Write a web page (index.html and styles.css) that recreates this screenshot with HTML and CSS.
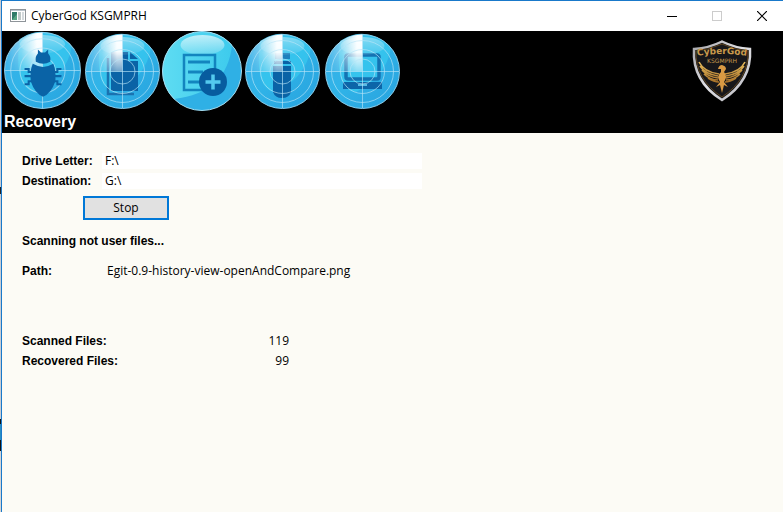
FILE: index.html
```html
<!DOCTYPE html>
<html lang="en">
<head>
<meta charset="utf-8">
<title>CyberGod KSGMPRH</title>
<link rel="stylesheet" href="styles.css">
</head>
<body>
<svg class="defs" width="0" height="0" aria-hidden="true">
  <defs>
    <linearGradient id="base" x1="0" y1="0" x2="1" y2="1">
      <stop offset="0" stop-color="#3aaee8"/><stop offset=".45" stop-color="#30b4e8"/><stop offset=".7" stop-color="#2cabe3"/><stop offset="1" stop-color="#27a3df"/>
    </linearGradient>
    <linearGradient id="sweep" x1="0" y1="0" x2="1" y2="0">
      <stop offset="0" stop-color="#fff" stop-opacity=".05"/><stop offset=".45" stop-color="#fff" stop-opacity=".4"/><stop offset=".85" stop-color="#fff" stop-opacity="1"/><stop offset="1" stop-color="#fff"/>
    </linearGradient>
    <linearGradient id="fade" x1="0" y1="0" x2="0" y2="1">
      <stop offset="0" stop-color="#fff"/><stop offset=".5" stop-color="#fff" stop-opacity=".95"/><stop offset="1" stop-color="#fff" stop-opacity=".4"/>
    </linearGradient>
    <linearGradient id="gloss" x1="0" y1="0" x2="0" y2="1">
      <stop offset="0" stop-color="#fff" stop-opacity=".65"/><stop offset="1" stop-color="#fff" stop-opacity=".15"/>
    </linearGradient>
    <linearGradient id="bright" x1="0" y1="0" x2="1" y2="0">
      <stop offset="0" stop-color="#5edcf2"/><stop offset="1" stop-color="#3ecbed"/>
    </linearGradient>
    <linearGradient id="gold" x1="0" y1="0" x2="0" y2="1">
      <stop offset="0" stop-color="#e9bd5c"/><stop offset="1" stop-color="#a8722a"/>
    </linearGradient>
    <linearGradient id="silver" x1="0" y1="0" x2="1" y2="1">
      <stop offset="0" stop-color="#a5a5aa"/><stop offset=".5" stop-color="#e2e2e6"/><stop offset="1" stop-color="#b4b4ba"/>
    </linearGradient>
    <mask id="down" maskUnits="userSpaceOnUse" x="0" y="0" width="80" height="80"><rect x="0" y="2" width="41" height="39" fill="url(#fade)"/></mask>
    <symbol id="disc" viewBox="0 0 80 80">
      <circle cx="40.500" cy="40.500" r="37" fill="url(#base)"/>
      <path d="M18 10A37 37 0 0 1 69 17Q64 46 34 61Q12 60 18 10Z" fill="#36c6ed" opacity=".85"/>
      <circle cx="40.500" cy="40.500" r="37" fill="none" stroke="#8bcdeb"/>
    </symbol>
    <symbol id="radar" viewBox="0 0 80 80">
      <ellipse cx="40.500" cy="15" rx="22" ry="9" fill="url(#gloss)" opacity=".6"/>
      <g mask="url(#down)"><path d="M40.500 40.500V3.500A37 37 0 0 0 3.500 40.500Z" fill="url(#sweep)"/></g>
      <g fill="none" stroke="#b9e5f7" stroke-opacity=".65">
        <circle cx="40.500" cy="40.500" r="12.500"/><circle cx="40.500" cy="40.500" r="22"/><circle cx="40.500" cy="40.500" r="31"/>
        <path d="M4 40.500H77M40.500 4V77"/>
      </g>
    </symbol>
  </defs>
</svg>
<div class="window">
  <header class="titlebar">
    <svg class="app-icon" viewBox="0 0 16 14" aria-hidden="true">
      <rect x=".5" y=".5" width="15" height="12" fill="#fff" stroke="#8e9499"/>
      <path d="M1 1.500H15" stroke="#b9c3ca"/>
      <rect x="2" y="3" width="5" height="8" fill="#2f7a68"/><path d="M2 11L7 5V11Z" fill="#57a583"/>
      <rect x="8" y="3" width="3" height="8" fill="#bfc8c8"/><rect x="12" y="3" width="2" height="8" fill="#d4dadd"/>
    </svg>
    <h1 class="title">CyberGod KSGMPRH</h1>
    <div class="controls">
      <button class="control" aria-label="Minimize"><svg viewBox="0 0 10 10"><path d="M0 5.500H10" stroke="#000"/></svg></button>
      <button class="control" aria-label="Maximize" disabled><svg viewBox="0 0 10 10"><rect x=".5" y=".5" width="9" height="9" fill="none" stroke="#ccc"/></svg></button>
      <button class="control" aria-label="Close"><svg viewBox="0 0 10 10"><path d="M0 0L10 10M10 0L0 10" stroke="#000" stroke-width="1.200"/></svg></button>
    </div>
  </header>
  <div class="banner">
    <div class="banner-top">
      <nav class="tools" aria-label="Tools">
        <button class="tool" aria-label="Virus scan"><svg viewBox="1 2 78 78">
          <use href="#disc" width="80" height="80"/>
          <use href="#radar" width="80" height="80"/>
          <g fill="#0a63a6"><path d="M34 32Q33 27 36 24L36 20L39 23H43L46 20L46 24Q49 27 48 32Q41 36 34 32Z"/><path d="M31 34Q41 40 51 34Q54 41 53 51Q49 63 41 66Q33 63 29 51Q28 41 31 34Z"/></g>
          <path d="M31 42H27V39H23M31 46H23M31 51H27V54H23M51 42H55V39H59M51 46H59M51 51H55V54H59" fill="none" stroke="#0a63a6" stroke-width="2"/>
        </svg></button>
        <button class="tool" aria-label="Documents"><svg viewBox="0 0 80 80">
          <use href="#disc" width="80" height="80"/>
          <path d="M26 27V63H52" fill="none" stroke="#1a72b0" stroke-width="2.500"/><path d="M29 21H46V30H56V60H29Z" fill="#0a63a6"/><path d="M48 21L56 28H48Z" fill="#0a63a6"/>
          <use href="#radar" width="80" height="80"/>
        </svg></button>
        <button class="tool" aria-label="Recovery" aria-current="page"><svg viewBox="0 0 80 80">
          <circle cx="40" cy="40" r="39.500" fill="#2fb0e5"/>
          <path d="M40 .5A39.500 39.500 0 0 0 12 68Q65 62 70 14Q58 .5 40 .5Z" fill="url(#bright)"/>
          <circle cx="40" cy="40" r="39.500" fill="none" stroke="#a5dcef"/>
          <ellipse cx="40.500" cy="14" rx="22" ry="10" fill="url(#gloss)"/>
          <rect x="22" y="24" width="31" height="35" fill="none" stroke="#1385bf" stroke-width="2.500"/>
          <path d="M26 31H48M26 41H41M26 51H38" stroke="#1385bf" stroke-width="3"/>
          <circle cx="51" cy="51" r="14" fill="#075c9f"/><path d="M51 43.500V58.500M43.500 51H58.500" stroke="#54c9ee" stroke-width="3.500"/>
        </svg></button>
        <button class="tool" aria-label="USB drive"><svg viewBox="0 0 80 80">
          <use href="#disc" width="80" height="80"/>
          <path d="M33 22H48V28H33Z" fill="#1d80bd"/><path d="M32 30H49V33H32Z" fill="#0a63a6"/><path d="M31 35H49V61Q47 67 40 67Q33 67 31 61Z" fill="#0a63a6"/>
          <use href="#radar" width="80" height="80"/>
        </svg></button>
        <button class="tool" aria-label="Computer"><svg viewBox="0 0 80 80">
          <use href="#disc" width="80" height="80"/>
          <rect x="24" y="24" width="33" height="24" rx="2" fill="none" stroke="#1473b3" stroke-width="3.500"/>
          <path d="M21 51H60V58H21Z" fill="#0c65a8"/><path d="M36 54H45" stroke="#55bce6" stroke-width="2"/>
          <use href="#radar" width="80" height="80"/>
        </svg></button>
      </nav>
      <svg class="crest" viewBox="0 0 64 64" role="img" aria-label="CyberGod KSGMPRH crest">
        <path d="M32 2.500Q45 9 60 10Q62 42 32 61Q2 42 4 10Q19 9 32 2.500Z" fill="#17171a" stroke="url(#silver)" stroke-width="2.500"/>
        <path d="M32 5Q45 11 58 12Q59 40 32 58Q5 40 6 12Q19 11 32 5Z" fill="none" stroke="#5c431f"/>
        <path id="arc" d="M6 17Q32 13 58 17" fill="none"/>
        <text class="crest-name"><textPath href="#arc" startOffset="50%">CyberGod</textPath></text>
        <text class="crest-code" x="32" y="24">KSGMPRH</text>
        <g fill="none" stroke="url(#gold)" stroke-width="1.600">
          <path d="M9 23Q14 33 29 35M10 27Q15 35 28 37M12 31Q18 38 28 39M14 35Q20 41 28 41M18 39Q24 43 29 43"/>
          <path d="M55 23Q50 33 35 35M54 27Q49 35 36 37M52 31Q46 38 36 39M50 35Q44 41 36 41M46 39Q40 43 35 43"/>
        </g>
        <path d="M28 30Q29 26 32 26Q36 27 36 30L34 33Q38 37 34 43L38 48L34 46L32 54L30 46L26 48L30 43Q26 37 31 33L31 30Z" fill="#d99a43"/>
      </svg>
    </div>
    <h2 class="page-name">Recovery</h2>
  </div>
  <main class="content">
    <div class="row"><label class="label" for="drive">Drive Letter:</label><input class="field" id="drive" value="F:\" readonly></div>
    <div class="row"><label class="label" for="dest">Destination:</label><input class="field" id="dest" value="G:\" readonly></div>
    <button class="stop">Stop</button>
    <p class="status">Scanning not user files...</p>
    <dl class="path"><dt>Path:</dt><dd>Egit-0.9-history-view-openAndCompare.png</dd></dl>
    <dl class="counts">
      <dt>Scanned Files:</dt><dd>119</dd>
      <dt>Recovered Files:</dt><dd>99</dd>
    </dl>
  </main>
</div>
</body>
</html>
```
FILE: styles.css
```css
* { box-sizing: border-box; }
body {
  margin: 0;
  padding-left: 1px;
  background: linear-gradient(#c8ccd4 0 187px, #222 187px 194px, #c8ccd4 194px 419px, #111 419px 424px, #2a8ec2 424px 440px, #111 440px 451px, #d4d4d6 451px);
  color: #000;
  font: 12px/20px "Open Sans", "Noto Sans", sans-serif;
}
.defs { position: absolute; }
.window {
  display: flex;
  flex-direction: column;
  min-height: 100vh;
  border: solid #1979ca;
  border-width: 1px 0 0 1px;
  background: #fcfbf5;
}
.titlebar {
  display: flex;
  align-items: center;
  height: 30px;
  padding-left: 8px;
  overflow: hidden;
  background: #fff;
}
.app-icon { width: 16px; height: 14px; }
.title { margin: 0 0 0 5px; font-size: 12px; font-weight: 400; }
.controls { display: flex; margin: 0 -1px 0 auto; align-self: stretch; }
.control {
  display: grid;
  place-items: center;
  width: 45px;
  padding: 0;
  border: 0;
  background: none;
}
.control svg { width: 10px; height: 10px; }
.banner { height: 102px; background: #000; color: #fff; }
.banner-top { display: flex; justify-content: space-between; height: 80px; padding-right: 29px; align-items: center; }
.tools { display: flex; }
.tool { width: 80px; height: 80px; padding: 0; border: 0; background: none; }
.tool svg { display: block; width: 80px; height: 80px; }
.crest { width: 64px; height: 64px; }
.crest-name, .crest-code { fill: #c99a4c; font-family: "DejaVu Sans", sans-serif; text-anchor: middle; }
.crest-name { font-size: 9px; font-weight: 700; }
.crest-code { font-size: 6px; }
.page-name { margin: 0; padding-left: 2px; font: bold 16px/22px "Liberation Sans", Arial, sans-serif; }
.content { padding: 18px 20px; }
.row { display: flex; align-items: center; height: 20px; }
.label, .status, dt { font-family: "Liberation Sans", Arial, sans-serif; font-weight: 700; }
.label { width: 80px; }
.field {
  width: 320px;
  height: 16px;
  padding: 0 3px;
  border: 0;
  background: #fff;
  font: inherit;
}
.stop {
  display: block;
  width: 86px;
  height: 24px;
  margin: 5px 0 11px 61px;
  padding: 0;
  border: 2px solid #0078d7;
  background: #e1e1e1;
  color: #000;
  font: inherit;
}
.status { margin: 0 0 10px; }
dl, dd { margin: 0; }
.path { display: grid; grid-template-columns: 85px 1fr; margin-bottom: 50px; }
.counts { display: grid; grid-template-columns: 187px 80px; }
.counts dd { text-align: right; }
```
